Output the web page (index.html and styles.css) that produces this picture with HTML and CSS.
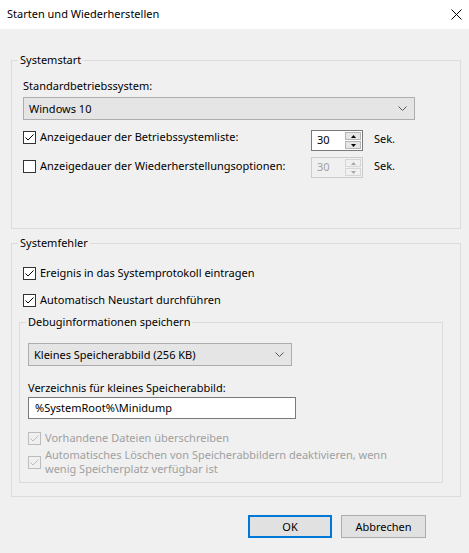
FILE: index.html
```html
<!DOCTYPE html>
<html lang="de">
<head>
  <meta charset="UTF-8">
  <title>Starten und Wiederherstellen</title>
  <link rel="stylesheet" href="styles.css">
</head>
<body>

  <!-- Titelleiste -->
  <div class="titlebar">
    <span class="title">Starten und Wiederherstellen</span>
    <svg class="close" width="11" height="11" viewBox="0 0 11 11"><path d="M0.5 0.5 L10.5 10.5 M10.5 0.5 L0.5 10.5"/></svg>
  </div>

  <div class="content">

    <!-- Systemstart -->
    <fieldset class="group group-start">
      <legend>Systemstart</legend>
      <div class="group-body">
        <div class="field-label os-label">Standardbetriebssystem:</div>
        <div class="combo combo-os">
          <span>Windows 10</span>
          <svg class="chevron" width="9" height="5" viewBox="0 0 9 5"><path d="M0.5 0.5 L4.5 4.5 L8.5 0.5"/></svg>
        </div>

        <div class="timer-row row-list">
          <div class="check timer-check">
            <span class="box"><svg width="11" height="11" viewBox="0 0 11 11"><path d="M1.5 5.5 L4 8 L9.5 2.5"/></svg></span>
            Anzeigedauer der Betriebssystemliste:
          </div>
          <div class="spin">
            <span class="spin-value">30</span>
            <span class="spin-buttons">
              <span class="spin-btn"><svg width="5" height="3" viewBox="0 0 5 3"><path d="M0 3 L2.5 0 L5 3 Z"/></svg></span>
              <span class="spin-btn"><svg width="5" height="3" viewBox="0 0 5 3"><path d="M0 0 L5 0 L2.5 3 Z"/></svg></span>
            </span>
          </div>
          <span class="unit">Sek.</span>
        </div>

        <div class="timer-row row-recovery">
          <div class="check timer-check">
            <span class="box"></span>
            Anzeigedauer der Wiederherstellungsoptionen:
          </div>
          <div class="spin disabled">
            <span class="spin-value">30</span>
            <span class="spin-buttons">
              <span class="spin-btn"><svg width="5" height="3" viewBox="0 0 5 3"><path d="M0 3 L2.5 0 L5 3 Z"/></svg></span>
              <span class="spin-btn"><svg width="5" height="3" viewBox="0 0 5 3"><path d="M0 0 L5 0 L2.5 3 Z"/></svg></span>
            </span>
          </div>
          <span class="unit">Sek.</span>
        </div>
      </div>
    </fieldset>

    <!-- Systemfehler -->
    <fieldset class="group group-error">
      <legend>Systemfehler</legend>
      <div class="group-body">
        <div class="check check-event">
          <span class="box"><svg width="11" height="11" viewBox="0 0 11 11"><path d="M1.5 5.5 L4 8 L9.5 2.5"/></svg></span>
          Ereignis in das Systemprotokoll eintragen
        </div>
        <div class="check check-restart">
          <span class="box"><svg width="11" height="11" viewBox="0 0 11 11"><path d="M1.5 5.5 L4 8 L9.5 2.5"/></svg></span>
          Automatisch Neustart durchführen
        </div>

        <fieldset class="group group-debug">
          <legend>Debuginformationen speichern</legend>
          <div class="debug-body">
            <div class="combo combo-dump">
              <span>Kleines Speicherabbild (256 KB)</span>
              <svg class="chevron" width="9" height="5" viewBox="0 0 9 5"><path d="M0.5 0.5 L4.5 4.5 L8.5 0.5"/></svg>
            </div>
            <div class="field-label dir-label">Verzeichnis für kleines Speicherabbild:</div>
            <div class="textbox">%SystemRoot%\Minidump</div>
            <div class="check disabled check-overwrite">
              <span class="box"><svg width="11" height="11" viewBox="0 0 11 11"><path d="M1.5 5.5 L4 8 L9.5 2.5"/></svg></span>
              Vorhandene Dateien überschreiben
            </div>
            <div class="check disabled check-autodelete">
              <span class="box"><svg width="11" height="11" viewBox="0 0 11 11"><path d="M1.5 5.5 L4 8 L9.5 2.5"/></svg></span>
              <span>Automatisches Löschen von Speicherabbildern deaktivieren, wenn wenig Speicherplatz verfügbar ist</span>
            </div>
          </div>
        </fieldset>
      </div>
    </fieldset>

    <!-- Schaltflächen -->
    <div class="actions">
      <button class="btn btn-default">OK</button>
      <button class="btn">Abbrechen</button>
    </div>
  </div>

</body>
</html>
```

FILE: styles.css
```css
body {
  margin: 0;
  width: 469px;
  height: 553px;
  background: #f0f0f0;
  font-family: "Noto Sans", "Open Sans", sans-serif;
  font-size: 11px;
  line-height: 16px;
  color: #000;
  overflow: hidden;
}
.titlebar {
  height: 29px;
  background: #fff;
  display: flex;
  align-items: center;
  justify-content: space-between;
  padding: 0 7px 0 7px;
}
.title {
  margin-top: -1px;
}
.close path {
  stroke: #000;
  stroke-width: 1;
  fill: none;
}
.content {
  padding: 23px 8px 0 11px;
}

/* Gruppenrahmen */
.group {
  margin: 0;
  padding: 0;
  border: 1px solid #dcdcdc;
  min-width: 0;
}
.group legend {
  padding: 0 2px;
  margin-left: 6px;
  line-height: 16px;
}
.group-body {
  padding: 0 11px;
}
.group-start .group-body {
  padding-bottom: 50px;
}
.group-error {
  margin-top: 6px;
}
.group-error .group-body {
  padding: 0 0 13px 7px;
}
.group-error .check-event,
.group-error .check-restart {
  margin-left: 4px;
}
.group-debug {
  width: 424px;
  box-sizing: border-box;
  margin-top: 6px;
}
.debug-body {
  padding: 0 8px 6px 8px;
}

/* Beschriftungen und Felder */
.os-label {
  margin-top: 10px;
}
.combo {
  box-sizing: border-box;
  height: 23px;
  background: #e5e5e5;
  border: 1px solid #adadad;
  display: flex;
  align-items: center;
  justify-content: space-between;
  padding: 0 7px 0 5px;
}
.combo-os {
  width: 392px;
  margin-top: 3px;
}
.combo-dump {
  width: 264px;
  margin-top: 13px;
}
.chevron path {
  fill: none;
  stroke: #555;
  stroke-width: 1;
}
.dir-label {
  margin-top: 14px;
}
.textbox {
  box-sizing: border-box;
  width: 268px;
  height: 22px;
  margin-top: 1px;
  background: #fff;
  border: 1px solid #7a7a7a;
  padding: 2px 0 0 6px;
}

/* Kontrollkästchen */
.check {
  display: flex;
  align-items: center;
  gap: 4px;
  min-height: 16px;
}
.box {
  box-sizing: border-box;
  flex: none;
  width: 13px;
  height: 13px;
  border: 1px solid #333;
  background: #fff;
}
.box svg {
  display: block;
}
.box path {
  fill: none;
  stroke: #000;
  stroke-width: 1;
}
.check.disabled {
  color: #a0a0a0;
}
.check.disabled .box {
  border-color: #bcbcbc;
  background: #f0f0f0;
}
.check.disabled .box path {
  stroke: #bcbcbc;
}
.check-event {
  margin-top: 14px;
}
.check-restart {
  margin-top: 11px;
}
.check-overwrite {
  margin-top: 11px;
}
.check-autodelete {
  margin-top: 2px;
  line-height: 14px;
  width: 360px;
}

/* Anzeigedauer mit Drehfeld */
.timer-row {
  display: flex;
  align-items: flex-start;
}
.row-list {
  margin-top: 10px;
}
.row-recovery {
  margin-top: 6px;
}
.timer-check {
  width: 288px;
}
.row-list .timer-check {
  margin-top: -1px;
}
.row-recovery .timer-check {
  margin-top: 1px;
}
.spin {
  box-sizing: border-box;
  width: 52px;
  height: 21px;
  border: 1px solid #7a7a7a;
  background: #fff;
  display: flex;
  justify-content: space-between;
}
.spin-value {
  padding: 1px 0 0 5px;
}
.spin-buttons {
  width: 16px;
  display: flex;
  flex-direction: column;
  gap: 1px;
  padding: 1px 1px 1px 0;
}
.spin-btn {
  flex: 1;
  background: #e6e6e6;
  border: 1px solid #b5b5b5;
  display: flex;
  align-items: center;
  justify-content: center;
}
.spin-btn svg {
  display: block;
  fill: #000;
}
.spin.disabled {
  border-color: #cccccc;
  background: #f0f0f0;
  color: #a0a0a0;
}
.spin.disabled .spin-btn {
  background: #f0f0f0;
  border-color: #d6d6d6;
}
.spin.disabled .spin-btn svg {
  fill: #a8a8a8;
}
.unit {
  margin: 1px 0 0 11px;
}

/* Schaltflächen */
.actions {
  display: flex;
  justify-content: flex-end;
  gap: 9px;
  margin-top: 18px;
  padding-right: 35px;
}
.btn {
  box-sizing: border-box;
  height: 23px;
  width: 85px;
  background: #e1e1e1;
  border: 1px solid #adadad;
  font-family: inherit;
  font-size: 11px;
  color: #000;
  padding: 0;
}
.btn-default {
  width: 84px;
  border-color: #0078d7;
  box-shadow: inset 0 0 0 1px #0078d7;
}
```
